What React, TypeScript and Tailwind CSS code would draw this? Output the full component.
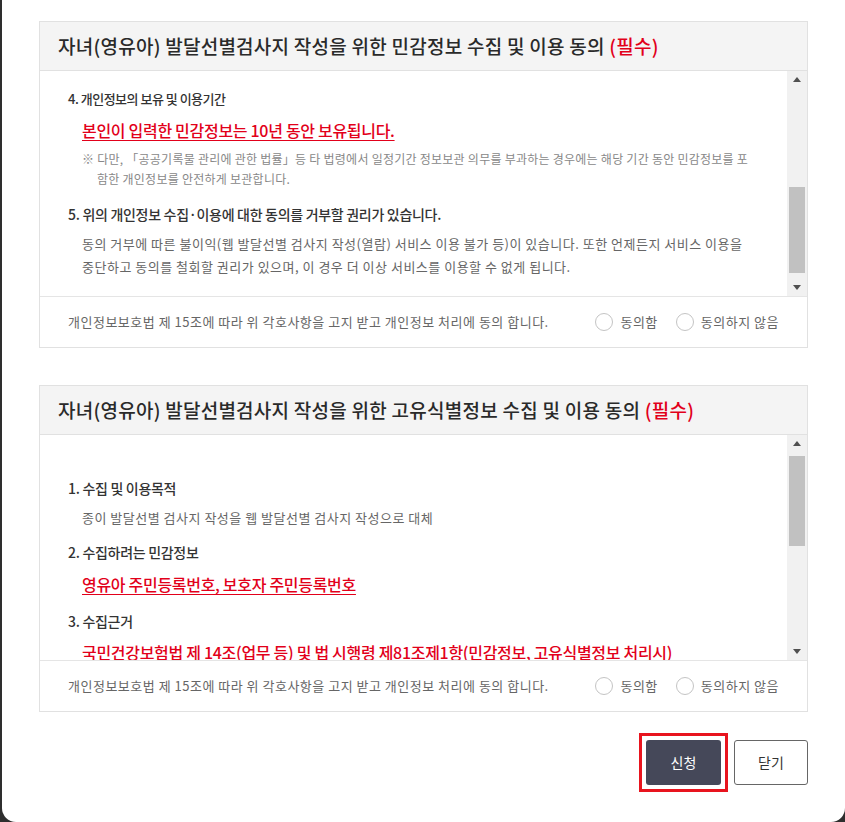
import React from "react";

const font = { fontFamily: '"Noto Sans CJK KR", "Noto Sans", sans-serif' };

function ScrollTrack({ thumbTop, thumbHeight }: { thumbTop: number; thumbHeight: number }) {
  return (
    <div className="flex w-[20px] shrink-0 flex-col bg-[#f1f1f1]">
      <div className="flex h-[17px] items-center justify-center">
        <svg width="8" height="5" viewBox="0 0 8 5">
          <path d="M0 5 L4 0 L8 5 Z" fill="#505050" />
        </svg>
      </div>
      <div className="mx-[2px] bg-[#c1c1c1]" style={{ marginTop: thumbTop, height: thumbHeight }} />
      <div className="flex-1" />
      <div className="flex h-[17px] items-center justify-center">
        <svg width="8" height="5" viewBox="0 0 8 5">
          <path d="M0 0 L8 0 L4 5 Z" fill="#505050" />
        </svg>
      </div>
    </div>
  );
}

function Radio({ label }: { label: string }) {
  return (
    <label className="flex items-center gap-[7px]">
      <span className="h-[18px] w-[18px] rounded-full border border-[#c4c4c4] bg-white" />
      <span className="text-[13px] tracking-[0.5px] text-[#666]">{label}</span>
    </label>
  );
}

function AgreeRow() {
  return (
    <div className="flex h-[50px] items-center justify-between pl-[28px] pr-[28px]">
      <p className="text-[13px] tracking-[0.5px] text-[#666]">
        개인정보보호법 제 15조에 따라 위 각호사항을 고지 받고 개인정보 처리에 동의 합니다.
      </p>
      <div className="flex items-center gap-[18px]">
        <Radio label="동의함" />
        <Radio label="동의하지 않음" />
      </div>
    </div>
  );
}

function Heading({ children }: { children: React.ReactNode }) {
  return (
    <h2 className="flex h-[49px] items-center border-b border-[#e1e1e1] bg-[#f4f4f4] pl-[18px] text-[19px] font-medium tracking-[0.25px] text-[#2a2a2a]">
      {children}
    </h2>
  );
}

const itemTitle = "text-[14px] leading-[20px] font-medium tracking-[-0.3px] text-[#333]";
const redLine =
  "pl-[14px] text-[16px] leading-[24px] font-medium tracking-[-0.3px] text-[#e2001a] underline underline-offset-[3px]";
const bodyText = "pl-[14px] text-[13px] leading-[23px] tracking-[0.5px] text-[#666]";

export default function App() {
  return (
    <div className="flex min-h-screen bg-[#2e2e2e]" style={font}>
      <div className="ml-[2px] h-[822px] w-[843px] rounded-b-[14px] bg-white px-[37px] pt-[21px]">
        <section className="border border-[#e1e1e1]">
          <Heading>
            자녀(영유아) 발달선별검사지 작성을 위한 민감정보 수집 및 이용 동의&nbsp;<span className="text-[#e2001a]">(필수)</span>
          </Heading>
          <div className="flex h-[226px] border-b border-[#e5e5e5]">
            <div className="flex-1 overflow-hidden pl-[28px] pr-[29px] pt-[18px]">
              <p className="text-[13px] leading-[20px] font-medium tracking-[-0.5px] text-[#333]">4. 개인정보의 보유 및 이용기간</p>
              <p className={`mt-[9px] ${redLine}`}>본인이 입력한 민감정보는 10년 동안 보유됩니다.</p>
              <p className="mt-[7px] pl-[29px] -indent-[15px] text-[12px] leading-[20px] tracking-[0.25px] text-[#888]">
                ※ 다만, 「공공기록물 관리에 관한 법률」등 타 법령에서 일정기간 정보보관 의무를 부과하는 경우에는 해당 기간 동안 민감정보를 포함한 개인정보를 안전하게 보관합니다.
              </p>
              <p className={`mt-[15px] ${itemTitle}`}>5. 위의 개인정보 수집·이용에 대한 동의를 거부할 권리가 있습니다.</p>
              <p className={`mt-[8px] ${bodyText}`}>
                동의 거부에 따른 불이익(웹 발달선별 검사지 작성(열람) 서비스 이용 불가 등)이 있습니다. 또한 언제든지 서비스 이용을 중단하고 동의를 철회할 권리가 있으며, 이 경우 더 이상 서비스를 이용할 수 없게 됩니다.
              </p>
            </div>
            <ScrollTrack thumbTop={99} thumbHeight={86} />
          </div>
          <AgreeRow />
        </section>

        <section className="mt-[37px] border border-[#e1e1e1]">
          <Heading>
            자녀(영유아) 발달선별검사지 작성을 위한 고유식별정보 수집 및 이용 동의&nbsp;<span className="text-[#e2001a]">(필수)</span>
          </Heading>
          <div className="flex h-[226px] border-b border-[#e5e5e5]">
            <div className="flex-1 overflow-hidden pl-[28px] pr-[29px] pt-[43px]">
              <p className={itemTitle}>1. 수집 및 이용목적</p>
              <p className={`mt-[8px] ${bodyText}`}>종이 발달선별 검사지 작성을 웹 발달선별 검사지 작성으로 대체</p>
              <p className={`mt-[13px] ${itemTitle}`}>2. 수집하려는 민감정보</p>
              <p className={`mt-[10px] ${redLine}`}>영유아 주민등록번호, 보호자 주민등록번호</p>
              <p className={`mt-[15px] ${itemTitle}`}>3. 수집근거</p>
              <p className={`mt-[9px] ${redLine}`}>
                국민건강보험법 제 14조(업무 등) 및 법 시행령 제81조제1항(민감정보, 고유식별정보 처리시)
              </p>
            </div>
            <ScrollTrack thumbTop={4} thumbHeight={90} />
          </div>
          <AgreeRow />
        </section>

        <div className="mt-[21px] flex items-center justify-end gap-[6px]">
          <div className="border-[3px] border-[#e8141e] p-[4px]">
            <button className="h-[45px] w-[75px] rounded-[3px] bg-[#454859] text-[14px] text-white">신청</button>
          </div>
          <button className="h-[45px] w-[74px] rounded-[3px] border border-[#666] bg-white text-[14px] text-[#333]">
            닫기
          </button>
        </div>
      </div>
    </div>
  );
}
